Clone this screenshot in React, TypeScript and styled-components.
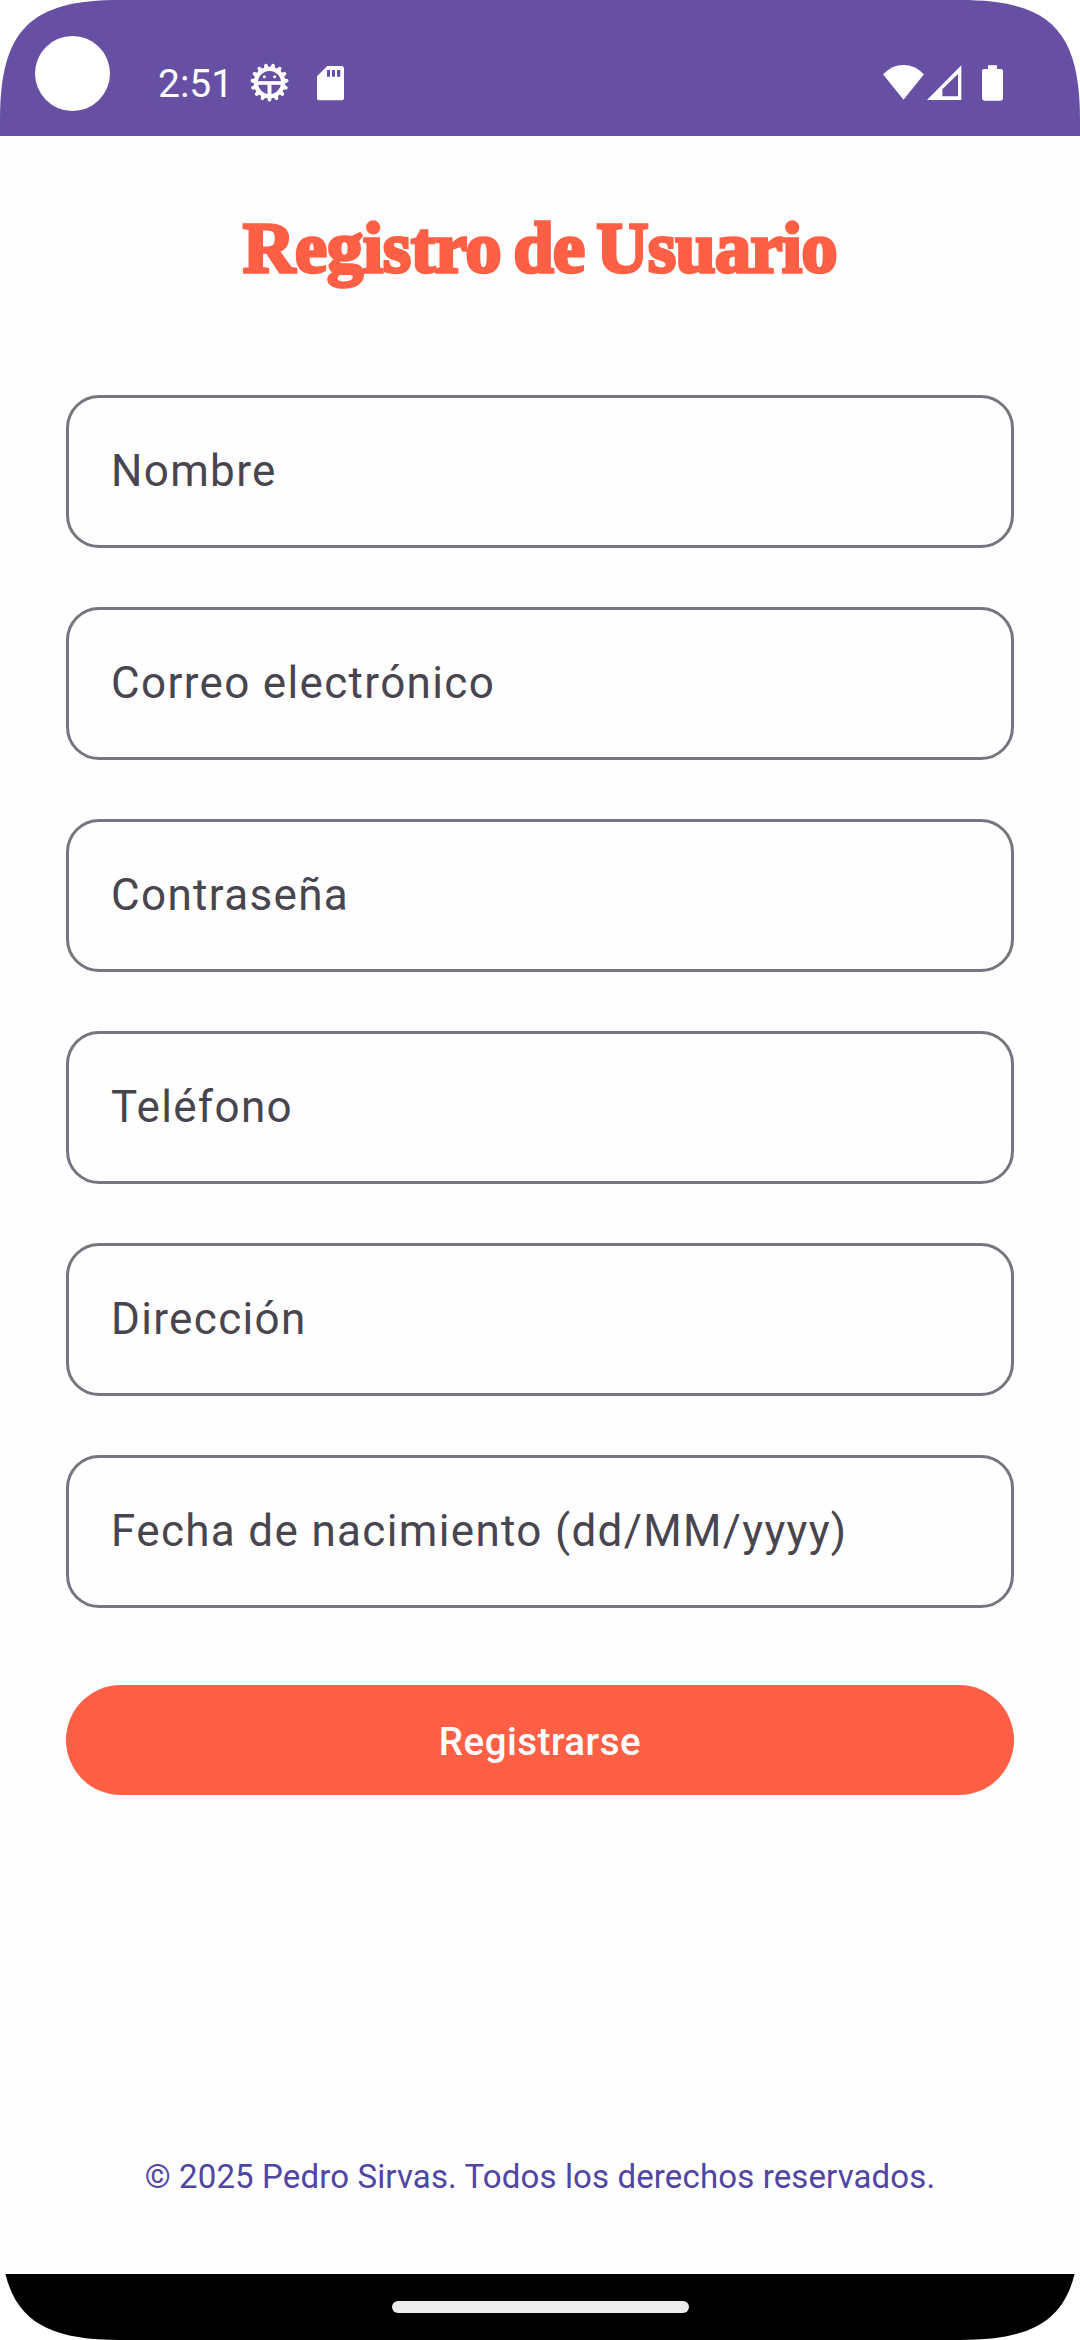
import React from "react";
import styled, { createGlobalStyle } from "styled-components";

const GlobalStyle = createGlobalStyle`
  body { margin: 0; background: #fff; }
  * { box-sizing: border-box; }
`;

const Screen = styled.div`
  width: 1080px;
  height: 2340px;
  display: flex;
  flex-direction: column;
  overflow: hidden;
  background: #fefefe;
  font-family: Roboto, "Noto Sans", sans-serif;
  clip-path: path("M0 120C0 30 30 0 120 0H960C1050 0 1080 30 1080 120V2220C1080 2310 1050 2340 960 2340H120C30 2340 0 2310 0 2220Z");
`;

const StatusBar = styled.header`
  height: 136px;
  flex: none;
  display: flex;
  align-items: flex-start;
  padding: 36px 77px 0 35px;
  background: #6750a3;
  color: #fff;
`;

const Camera = styled.div`
  width: 75px;
  height: 75px;
  border-radius: 50%;
  background: #fff;
`;

const Clock = styled.time`
  width: 73px;
  margin: 25px 0 0 48px;
  font-size: 39px;
  line-height: 46px;
  white-space: nowrap;
`;

const StatusIcon = styled.svg<{ $left: number; $top: number }>`
  display: block;
  flex: none;
  margin: ${(p) => p.$top}px 0 0 ${(p) => p.$left}px;
`;

const Spacer = styled.div`
  flex: 1;
`;

const Page = styled.main`
  flex: 1;
  display: flex;
  flex-direction: column;
  padding: 66px 66px 75px;
`;

const Title = styled.h1`
  margin: 0 0 101px;
  height: 92px;
  display: flex;
  justify-content: center;
  gap: 12px;
  font: bold 72px/92px "Liberation Serif", serif;
  color: #ff6045;
  -webkit-text-stroke: 3.4px #ff6045;
`;

const Word = styled.span<{ $spacing: number }>`
  letter-spacing: ${(p) => p.$spacing}px;
  white-space: nowrap;
`;

const Form = styled.form`
  display: flex;
  flex-direction: column;
  gap: 59px;
`;

const Field = styled.label`
  height: 153px;
  display: flex;
  align-items: center;
  padding: 0 41px 2px 42px;
  border: 3px solid #79747e;
  border-radius: 33px;
  color: #49454f;
  font-size: 44px;
  letter-spacing: 1.34px;
`;

const Submit = styled.button`
  height: 110px;
  margin-top: 18px;
  padding: 4px 0 0;
  border: 0;
  border-radius: 55px;
  background: #ff6045;
  color: #fff;
  font: 500 38.5px/46px Roboto, sans-serif;
  letter-spacing: 0.5px;
`;

const Copyright = styled.footer`
  margin-top: auto;
  text-align: center;
  color: #5145a3;
  font-size: 33px;
  line-height: 44px;
  letter-spacing: 0.13px;
`;

const NavBar = styled.nav`
  height: 66px;
  flex: none;
  display: flex;
  justify-content: center;
  align-items: center;
  background: #000;
`;

const Handle = styled.div`
  width: 297px;
  height: 12px;
  border-radius: 6px;
  background: #ececec;
`;

const fields = [
  "Nombre",
  "Correo electrónico",
  "Contraseña",
  "Teléfono",
  "Dirección",
  "Fecha de nacimiento (dd/MM/yyyy)",
];

const teeth = Array.from({ length: 15 }, (_, i) => (i + 0.5) * 24);

const GearIcon = () => (
  <StatusIcon $left={19} $top={27} width="39" height="39" viewBox="-58.5 -58.5 117 117">
    <g fill="none" stroke="#fff">
      <circle r="41" strokeWidth="13" />
      <path d="M-40 1.500H40" strokeWidth="11" />
      <path d="M0 5V44" strokeWidth="12" />
      {teeth.map((a) => (
        <path key={a} d="M-3 -45L-1 -53H1L3 -45Z" strokeWidth="8" strokeLinejoin="round" transform={`rotate(${a})`} />
      ))}
    </g>
    <circle cx="-15.500" cy="-17" r="4.500" fill="#fff" />
    <circle cx="15.500" cy="-17" r="4.500" fill="#fff" />
  </StatusIcon>
);

const SdCardIcon = () => (
  <StatusIcon $left={28} $top={30} width="27" height="35" viewBox="0 0 81 105">
    <path
      fill="#fff"
      fillRule="evenodd"
      d="M31 0H73Q81 0 81 8V95Q81 103 73 103H8Q0 103 0 95V31ZM30 12V32H39V12ZM45 12V32H54V12ZM60 12V32H70V12Z"
    />
  </StatusIcon>
);

const WifiIcon = () => (
  <StatusIcon $left={0} $top={29} width="41" height="35" viewBox="0 0 123 105">
    <path fill="#fff" d="M0 28Q27 0 61.500 0T123 28L61.500 104Z" />
  </StatusIcon>
);

const SignalIcon = () => (
  <StatusIcon $left={3} $top={29} width="35" height="35" viewBox="0 0 105 105">
    <path fill="#fff" fillRule="evenodd" d="M0 105L103 1V105ZM46 73V94H93V27Z" />
  </StatusIcon>
);

const BatteryIcon = () => (
  <StatusIcon $left={20} $top={29} width="21" height="36" viewBox="0 0 63 108">
    <path fill="#fff" d="M18 1H45V12H57Q63 12 63 18V100Q63 107 56 107H7Q0 107 0 100V18Q0 12 6 12H18Z" />
  </StatusIcon>
);

export default function App() {
  return (
    <>
      <GlobalStyle />
      <Screen>
        <StatusBar>
          <Camera />
          <Clock>2:51</Clock>
          <GearIcon />
          <SdCardIcon />
          <Spacer />
          <WifiIcon />
          <SignalIcon />
          <BatteryIcon />
        </StatusBar>
        <Page>
          <Title>
            <Word $spacing={0}>Registro</Word>
            <Word $spacing={-0.5}>de</Word>
            <Word $spacing={-0.5}>Usuario</Word>
          </Title>
          <Form>
            {fields.map((name) => (
              <Field key={name}>{name}</Field>
            ))}
            <Submit type="button">Registrarse</Submit>
          </Form>
          <Copyright>© 2025 Pedro Sirvas. Todos los derechos reservados.</Copyright>
        </Page>
        <NavBar>
          <Handle />
        </NavBar>
      </Screen>
    </>
  );
}
